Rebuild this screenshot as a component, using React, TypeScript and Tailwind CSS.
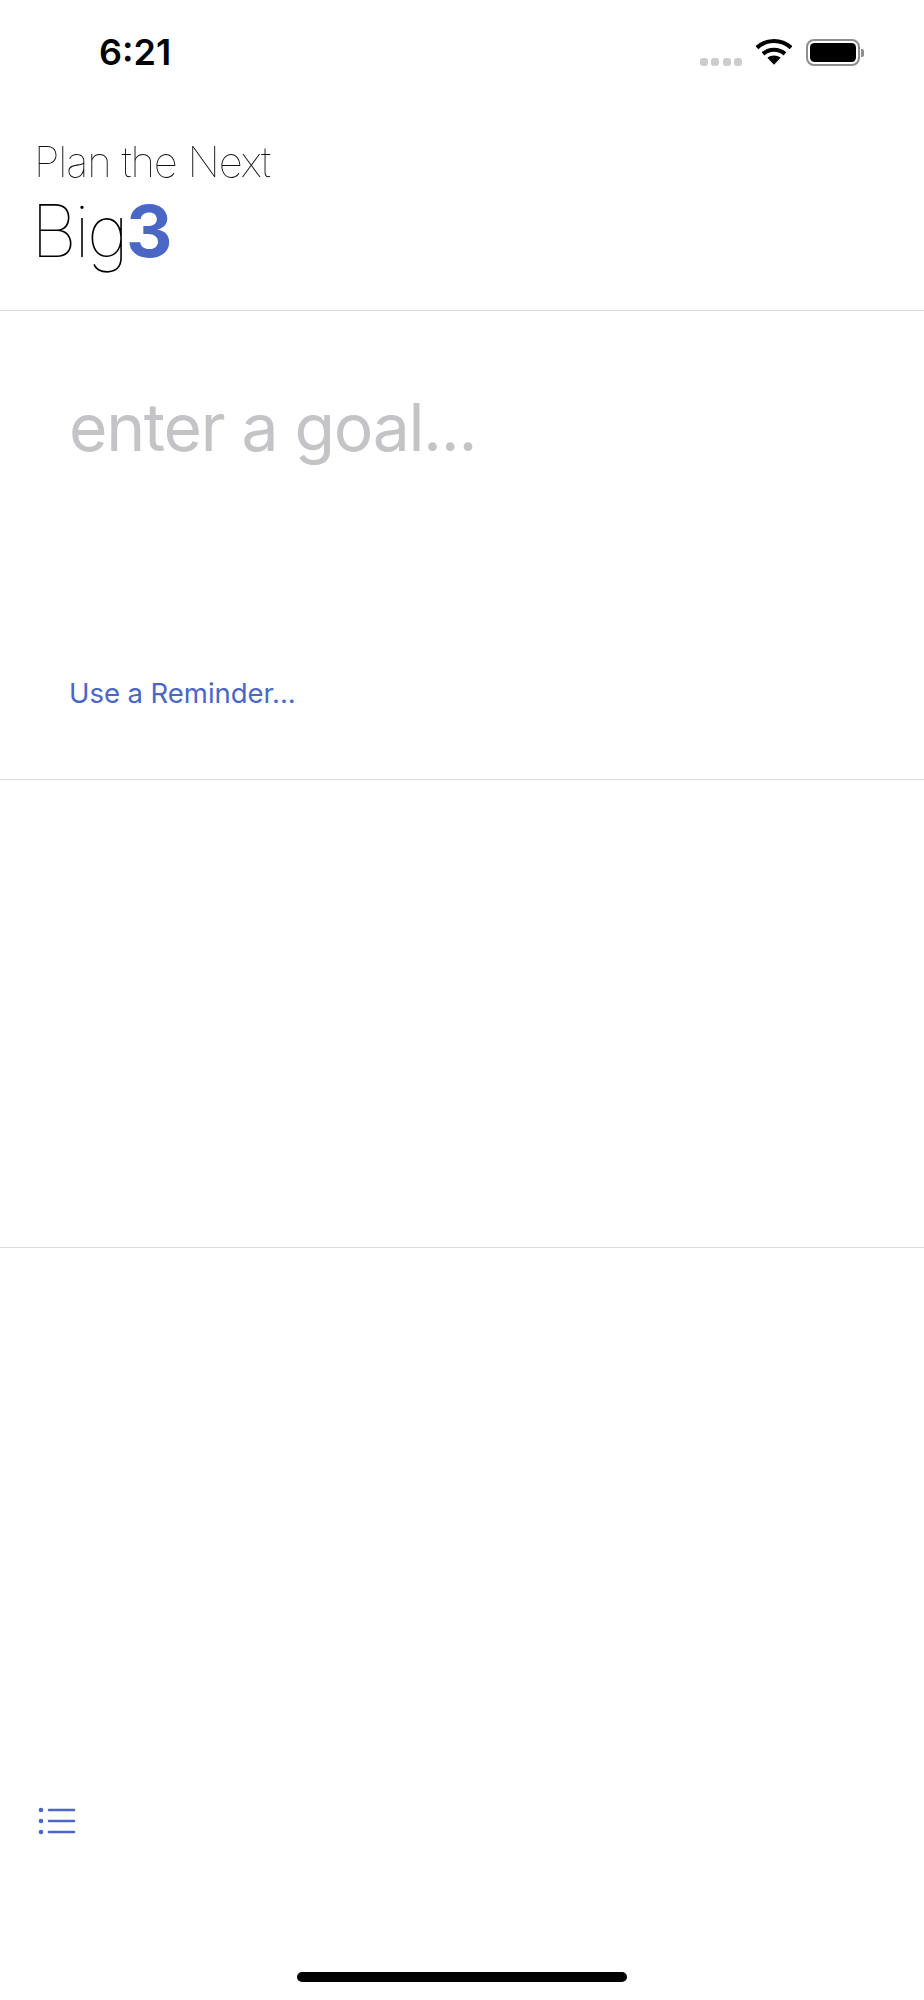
const inter = "font-['Inter','Liberation_Sans',sans-serif]";

const StatusBar = () => (
  <div className="flex h-[104px] items-start justify-between pl-[99px] pr-[60px] pt-[33px]">
    <span className="text-[36px] leading-[38px] font-semibold text-black">6:21</span>
    <div className="flex items-start pt-[5px]">
      <div className="mt-[20px] mr-[14px] flex gap-[3.5px]">
        <span className="h-[8px] w-[8px] rounded-[3px] bg-[#cdcdcd]" />
        <span className="h-[8px] w-[8px] rounded-[3px] bg-[#cdcdcd]" />
        <span className="h-[8px] w-[8px] rounded-[3px] bg-[#cdcdcd]" />
        <span className="h-[8px] w-[8px] rounded-[3px] bg-[#cdcdcd]" />
      </div>
      {/* wifi */}
      <svg width="36" height="28" viewBox="0 0 38 28" className="mr-[14px]">
        <path d="M1 9.5C11 0 27 0 37 9.5" fill="none" stroke="#000" strokeWidth="4.4" />
        <path d="M7.5 16C14 10.2 24 10.2 30.5 16" fill="none" stroke="#000" strokeWidth="4.4" />
        <path d="M12 20.2C16.5 16.8 21.5 16.8 26 20.2L19 27.5Z" fill="#000" />
      </svg>
      {/* battery */}
      <div className="mt-[1px] flex items-center">
        <div className="flex h-[27px] w-[54px] rounded-[8px] border-[2px] border-[#8e8e8e] p-[2px]">
          <div className="flex-1 rounded-[4.5px] bg-black" />
        </div>
        <span className="ml-[1px] h-[8px] w-[3px] rounded-r-[2px] bg-[#8e8e8e]" />
      </div>
    </div>
  </div>
);

const Header = () => (
  <div className="h-[207px] border-b border-[#dcdcdc] pl-[31px] pt-[34px]">
    <div className="ml-[3px] text-[42px] leading-[48px] font-thin tracking-[-1.1px] text-[#111] transform-gpu">Plan the Next</div>
    <div className="mt-[5px] flex items-baseline text-[72px] leading-[80px] tracking-[-2.8px] text-black">
      <span className="font-thin">Big</span>
      <span className="font-bold text-[#4a67c6]">3</span>
    </div>
  </div>
);

const ListIcon = () => (
  <svg width="40" height="28" viewBox="0 0 40 28" fill="none">
    <circle cx="3" cy="3" r="2.3" fill="#4a67c6" />
    <circle cx="3" cy="14" r="2.3" fill="#4a67c6" />
    <circle cx="3" cy="25" r="2.3" fill="#4a67c6" />
    <path d="M11 3H36M11 14H36M11 25H36" stroke="#4a67c6" strokeWidth="2.6" strokeLinecap="round" />
  </svg>
);

export default function App() {
  return (
    <div className={`relative flex h-[2000px] w-[924px] flex-col bg-white antialiased ${inter}`}>
      <StatusBar />
      <Header />

      {/* goal slots */}
      <div className="flex h-[469px] flex-col justify-between border-b border-[#dcdcdc] pb-[69px] pl-[69px] pt-[76px]">
        <div className="text-[66px] leading-[80px] tracking-[-1.3px] text-[#c4c4c6]">enter a goal...</div>
        <div className="text-[27.5px] leading-[34px] tracking-[-0.05px] text-[#4a67c6]">Use a Reminder...</div>
      </div>
      <div className="h-[468px] border-b border-[#dcdcdc]" />

      <div className="flex flex-1 flex-col">
        <div className="ml-[38px] mt-[559px]">
          <ListIcon />
        </div>
      </div>

      {/* home indicator */}
      <div className="absolute bottom-[18px] left-[297px] h-[10px] w-[330px] rounded-full bg-black" />
    </div>
  );
}
